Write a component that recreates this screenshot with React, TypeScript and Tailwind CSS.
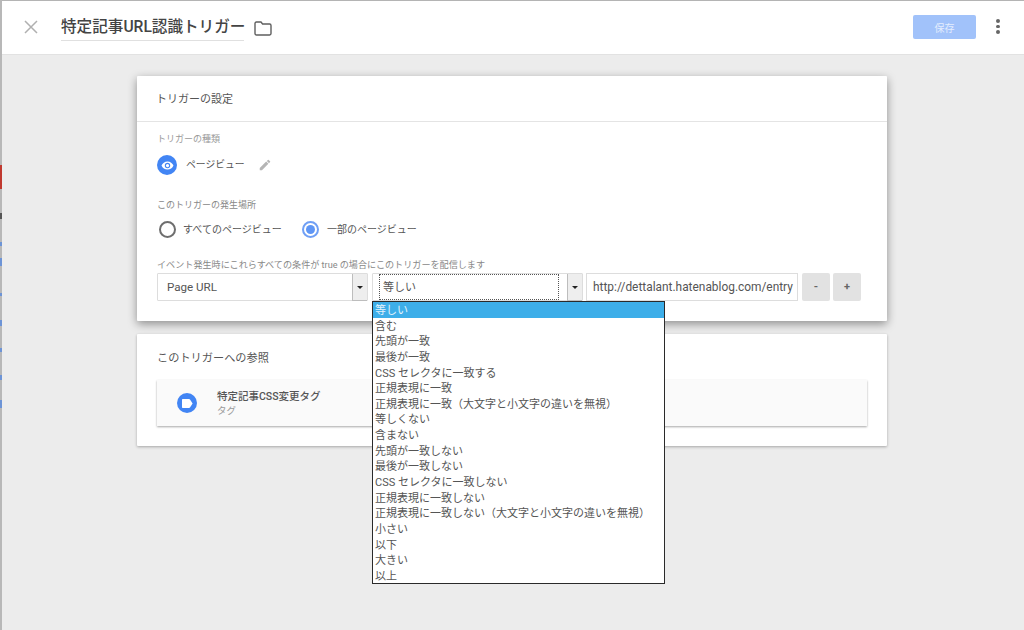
import React from "react";

const font = { fontFamily: '"Roboto","Noto Sans CJK JP",sans-serif' };

const options = ["等しい","含む","先頭が一致","最後が一致","CSS セレクタに一致する","正規表現に一致","正規表現に一致（大文字と小文字の違いを無視）","等しくない","含まない","先頭が一致しない","最後が一致しない","CSS セレクタに一致しない","正規表現に一致しない","正規表現に一致しない（大文字と小文字の違いを無視）","小さい","以下","大きい","以上"];

function Arrow() {
  return (
    <div className="w-[15px] h-[27px] bg-[#eeeeee] border-l border-b border-[#bdbdbd] flex items-center justify-center shrink-0">
      <div className="w-0 h-0 border-l-[3px] border-r-[3px] border-t-[3px] border-l-transparent border-r-transparent border-t-[#222222]" />
    </div>
  );
}

export default function App() {
  return (
    <div style={font} className="w-[1024px] h-[630px] overflow-hidden flex bg-[#ececec] text-[#5f5f5f]">
      <div className="w-[2px] bg-[#b8b8b8] shrink-0 flex flex-col">
        <div className="h-[165px] shrink-0" />
        <div className="h-[24px] bg-[#c0392f] shrink-0" />
        <div className="h-[24px] shrink-0" />
        <div className="h-[6px] bg-[#555555] shrink-0" />
        <div className="h-[23px] shrink-0" />
        <div className="h-[4px] bg-[#6d94d6] shrink-0" />
        <div className="h-[12px] shrink-0" />
        <div className="h-[8px] bg-[#6d94d6] shrink-0" />
        <div className="h-[27px] shrink-0" />
        <div className="h-[3px] bg-[#6d94d6] shrink-0" />
        <div className="h-[24px] shrink-0" />
        <div className="h-[6px] bg-[#6d94d6] shrink-0" />
        <div className="h-[22px] shrink-0" />
        <div className="h-[4px] bg-[#6d94d6] shrink-0" />
        <div className="h-[23px] shrink-0" />
        <div className="h-[5px] bg-[#6d94d6] shrink-0" />
        <div className="h-[20px] shrink-0" />
        <div className="h-[8px] bg-[#6d94d6] shrink-0" />
      </div>
      <div className="flex-1 flex flex-col min-w-0">
        <div className="h-px bg-[#b4b4b4] shrink-0" />
        <header className="h-[54px] bg-white border-b border-[#e2e2e2] flex items-center shrink-0 pl-[22px] pr-[23px] pb-[2px]">
          <svg width="14" height="14" viewBox="0 0 14 14" className="shrink-0"><path d="M1 1 13 13M13 1 1 13" stroke="#b0b0b0" strokeWidth="1.5" /></svg>
          <div className="ml-[23px] w-[183px] h-[28px] border-b border-[#e0e0e0] text-[15.6px] leading-[29px] font-medium text-[#444444] whitespace-nowrap">特定記事URL認識トリガー</div>
          <svg width="18" height="15" viewBox="0 0 18 15" fill="none" className="ml-[10px] mt-[3px] shrink-0"><path d="M1 2.5C1 1.7 1.6 1 2.4 1H7l1.6 2h7c.8 0 1.4.6 1.4 1.4v8.2c0 .8-.6 1.4-1.4 1.4H2.4C1.6 14 1 13.4 1 12.6z" stroke="#5f5f5f" strokeWidth="1.4" /></svg>
          <div className="flex-1" />
          <div className="w-[63px] h-[24px] pt-[3px] bg-[#a1c2fa] rounded-[2px] text-[#e4edfd] text-[10px] flex items-center justify-center">保存</div>
          <div className="ml-[20px] flex flex-col gap-[2px] w-[4px] mr-[1px]">
            <span className="w-[4px] h-[3.5px] rounded-full bg-[#666666]" />
            <span className="w-[4px] h-[3.5px] rounded-full bg-[#666666]" />
            <span className="w-[4px] h-[3.5px] rounded-full bg-[#666666]" />
          </div>
        </header>
        <main className="flex-1 pt-[21px] pl-[135px] w-[885px]">
          <section className="bg-white h-[245px] shadow-[0_3px_10px_rgba(0,0,0,0.4)] rounded-[1px]">
            <div className="h-[46px] pt-[4px] border-b border-[#e4e4e4] pl-[19px] flex items-center text-[11px] text-[#555555]">トリガーの設定</div>
            <div className="pl-[20px] pt-[11px]">
              <div className="text-[9px] leading-[12px] text-[#9a9a9a]">トリガーの種類</div>
              <div className="flex items-center mt-[10px] h-[20px]">
                <div className="w-[20px] h-[20px] rounded-full bg-[#4285f4] flex items-center justify-center">
                  <svg width="13" height="13" viewBox="0 0 24 24" fill="white"><path d="M12 4.5C7 4.5 2.7 7.6 1 12c1.7 4.4 6 7.5 11 7.5s9.3-3.1 11-7.5c-1.7-4.4-6-7.5-11-7.5zM12 17a5 5 0 1 1 0-10 5 5 0 0 1 0 10zm0-8a3 3 0 1 0 0 6 3 3 0 0 0 0-6z" /></svg>
                </div>
                <span className="ml-[9px] text-[9.8px] text-[#555555]">ページビュー</span>
                <svg width="14" height="14" viewBox="0 0 24 24" fill="#b5b5b5" className="ml-[13px]"><path d="M3 17.25V21h3.75L17.8 9.94l-3.75-3.75zM20.7 7.04a1 1 0 0 0 0-1.41l-2.34-2.34a1 1 0 0 0-1.41 0l-1.83 1.83 3.75 3.75z" /></svg>
              </div>
              <div className="mt-[24px] text-[9px] leading-[12px] text-[#888888]">このトリガーの発生場所</div>
              <div className="flex items-center mt-[8px] h-[20px]">
                <div className="ml-[2px] w-[17px] h-[17px] rounded-full border-2 border-[#6e6e6e] bg-white" />
                <span className="ml-[7px] text-[10px] text-[#555555] w-[119px]">すべてのページビュー</span>
                <div className="w-[17px] h-[17px] rounded-full border-2 border-[#6f9ff5] flex items-center justify-center">
                  <div className="w-[9px] h-[9px] rounded-full bg-[#5f96f5]" />
                </div>
                <span className="ml-[8px] text-[10px] text-[#555555]">一部のページビュー</span>
              </div>
              <div className="mt-[20px] text-[9.1px] leading-[12px] text-[#888888] whitespace-nowrap">イベント発生時にこれらすべての条件が true の場合にこのトリガーを配信します</div>
              <div className="flex mt-[2px] h-[28px] relative">
                <div className="w-[211px] h-[28px] border border-[#dddddd] flex items-start rounded-[1px]">
                  <span className="flex-1 pl-[9px] text-[11.6px] leading-[26px] text-[#555555]">Page URL</span>
                  <Arrow />
                </div>
                <div className="ml-[4px] w-[211px] h-[28px] border border-[#dddddd] flex items-start rounded-[1px]">
                  <div className="ml-[6px] w-[180px] h-[26px] border border-dotted border-[#555555] pl-[3px] text-[11px] leading-[26px] text-[#555555] mr-auto">等しい</div>
                  <Arrow />
                </div>
                <div className="ml-[3px] w-[212px] h-[28px] border border-[#dddddd] pl-[6px] text-[11.9px] leading-[26px] text-[#555555] whitespace-nowrap">http://dettalant.hatenablog.com/entry</div>
                <div className="ml-[4px] w-[28px] h-[28px] bg-[#e2e2e2] rounded-[2px] flex items-center justify-center text-[11px] font-bold text-[#666666]">-</div>
                <div className="ml-[3px] w-[28px] h-[28px] bg-[#e2e2e2] rounded-[2px] flex items-center justify-center text-[11px] font-bold text-[#666666]">+</div>
                <ul className="absolute left-[215px] top-[28px] w-[293px] h-[283px] bg-white border border-[#2a2a2a] z-10 text-[11px] text-[#555555] overflow-hidden">
                  {options.map((o, i) => (
                    <li key={o} className={`h-[15.65px] leading-[17.6px] pl-[2px] whitespace-nowrap ${i === 0 ? "bg-[#3daee9] text-[#e3f2fb]" : ""}`}>{o}</li>
                  ))}
                </ul>
              </div>
            </div>
          </section>
          <section className="mt-[13px] bg-white h-[112px] shadow-[0_1px_3px_rgba(0,0,0,0.3)] rounded-[1px] pt-[16px] px-[20px]">
            <div className="text-[11.2px] leading-[18px] text-[#555555]">このトリガーへの参照</div>
            <div className="mt-[12px] w-[710px] h-[46px] bg-[#fafafa] shadow-[0_1px_2px_rgba(0,0,0,0.35)] flex items-center pl-[20px]">
              <div className="w-[20px] h-[20px] rounded-full bg-[#4285f4] flex items-center justify-center">
                <svg width="11" height="9" viewBox="0 0 11 9" fill="white"><path d="M1 0h6c.4 0 .8.2 1 .5L10.6 4.5 8 8.5c-.2.3-.6.5-1 .5H1c-.6 0-1-.4-1-1V1c0-.6.4-1 1-1z" /></svg>
              </div>
              <div className="ml-[20px] flex flex-col">
                <span className="text-[10.5px] leading-[14px] font-medium text-[#555555]">特定記事CSS変更タグ</span>
                <span className="text-[9.5px] leading-[13px] text-[#999999]">タグ</span>
              </div>
            </div>
          </section>
        </main>
      </div>
    </div>
  );
}
